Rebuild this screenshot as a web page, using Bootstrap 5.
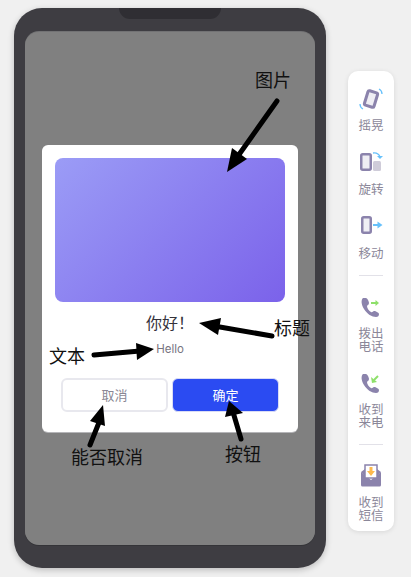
<!DOCTYPE html>
<html lang="zh">
<head>
<meta charset="utf-8">
<title>Dialog</title>
<link href="https://cdn.jsdelivr.net/npm/bootstrap@5.3.0/dist/css/bootstrap.min.css" rel="stylesheet">
<style>
html,body{height:100%;margin:0}
body{width:411px;height:577px;overflow:hidden;background:#f0f0f0;font-family:"Inter","Noto Sans CJK SC",sans-serif;position:relative}
.stage{padding:8px 0 0 14px;gap:22px}
.phone{width:312px;height:560px;background:#3e3d42;border-radius:28px;padding:24px 11px 23px;position:relative;box-shadow:0 2px 6px rgba(0,0,0,.22)}
.notch{position:absolute;top:0;left:105px;width:102px;height:11px;background:#2f2e33;border-radius:0 0 11px 11px}
.screen{height:513px;background:#808080;border-radius:14px;box-shadow:0 -1px 0 #727274,0 1px 0 #343438;padding-top:113px}
.dialog{width:256px;height:287px;margin-left:17px;background:#fff;border-radius:6px;padding:13px;box-shadow:0 1px 0 #b5b5b8}
.pic{height:144px;border-radius:8px;background:linear-gradient(135deg,#9b9cf6 0%,#7b62ea 100%)}
.ttl{font-size:16px;line-height:20px;margin-top:11px;color:#35323c;text-align:center}
.sub{font-size:11.500px;line-height:14px;margin-top:9px;color:#77747f;text-align:center}
.acts{margin:22px 6px 0;gap:4px}
.act{flex:0 0 107px;height:34px;border-radius:6px;font-size:13px;padding:0;line-height:30px}
.act-c{background:#fff;border:2px solid #e8e8ee;color:#8a8794}
.act-ok{background:#2b4bf2;border:1px solid #d9dcf5;color:#fff;line-height:32px}
.rail{width:46px;height:460px;margin-top:63px;background:#fff;border-radius:10px;box-shadow:0 1px 5px rgba(0,0,0,.1);padding-top:15px}
.tool{height:64px;font-size:12.500px;line-height:12.500px;color:#8b8799;text-align:center}
.tool svg{display:block;margin:0 auto 8px}
.tool-2{height:76px}
.tool-2 svg{margin-bottom:7px}
.sep{width:24px;height:1px;background:#e2e1e8;margin:0 auto 18px}
.sep-a{margin-top:-3px;margin-bottom:19px}
.sep-b{margin-top:-3px}
.tool-3 svg{margin-bottom:8px}
.ink{position:absolute;left:0;top:0;pointer-events:none}
.note{position:absolute;font-size:18px;line-height:22px;color:#111;white-space:nowrap}
</style>
</head>
<body>
<div class="stage d-flex align-items-start">
  <div class="phone">
    <div class="notch"></div>
    <div class="screen">
      <div class="dialog">
        <div class="pic"></div>
        <div class="ttl">你好！</div>
        <div class="sub">Hello</div>
        <div class="acts d-flex">
          <button class="btn act act-c" type="button">取消</button>
          <button class="btn act act-ok" type="button">确定</button>
        </div>
      </div>
    </div>
  </div>
  <div class="rail">
    <div class="tool">
      <svg width="28" height="26" viewBox="0 0 28 26"><rect x="9" y="5.500" width="10" height="15" rx="1.500" fill="#efeef4" stroke="#8b83ac" stroke-width="3" transform="rotate(17 14 13)"/><path d="M22 3c2 1 3 3 3 5M6 23c-2-1-3-3-3-5" fill="none" stroke="#67c1fb" stroke-width="1.300"/></svg>
      摇晃
    </div>
    <div class="tool">
      <svg width="28" height="26" viewBox="0 0 28 26"><rect x="4.250" y="4.250" width="9.500" height="15.500" rx="1.500" fill="#efeef4" stroke="#8b83ac" stroke-width="2.500"/><rect x="16" y="11" width="8" height="10" rx="1.500" fill="#cfccd9"/><path d="M16 3c4-.5 6 1 7 4" fill="none" stroke="#67c1fb" stroke-width="1.300"/><path d="M20 6h6l-3 3z" fill="#67c1fb"/></svg>
      旋转
    </div>
    <div class="tool">
      <svg width="28" height="26" viewBox="0 0 28 26"><rect x="5.250" y="3.250" width="8.500" height="15.500" rx="1.500" fill="#efeef4" stroke="#8b83ac" stroke-width="2.500"/><path d="M16 11h5" stroke="#67c1fb" stroke-width="2"/><path d="M20.500 7.500l5 3.500-5 3.500z" fill="#67c1fb"/></svg>
      移动
    </div>
    <div class="sep sep-a"></div>
    <div class="tool tool-2">
      <svg width="28" height="26" viewBox="0 0 28 26"><path d="M6 3C4 5 4 9 7 14s8 8 12 8c2 0 3-1 3-3 0-1-3-3-5-3-1 0-2 2-3 1-2-1-4-4-4-6 0-1 2-1 2-3 0-2-2-5-3-5z" fill="#8b83ac"/><path d="M14 8h5" stroke="#8ee06a" stroke-width="2"/><path d="M18.500 5l3.500 3-3.500 3z" fill="#8ee06a"/></svg>
      拨出<br>电话
    </div>
    <div class="tool tool-2">
      <svg width="28" height="26" viewBox="0 0 28 26"><path d="M6 3C4 5 4 9 7 14s8 8 12 8c2 0 3-1 3-3 0-1-3-3-5-3-1 0-2 2-3 1-2-1-4-4-4-6 0-1 2-1 2-3 0-2-2-5-3-5z" fill="#8b83ac"/><path d="M21 5l-4 4" stroke="#8ee06a" stroke-width="2"/><path d="M14 6l1 6 5-1z" fill="#8ee06a"/></svg>
      收到<br>来电
    </div>
    <div class="sep sep-b"></div>
    <div class="tool tool-3">
      <svg width="28" height="26" viewBox="0 0 28 26"><path d="M4 9l10 8 10-8v13a1.500 1.500 0 0 1-1.500 1.500h-17A1.500 1.500 0 0 1 4 22z" fill="#8b83ac"/><path d="M4 9l4-3v7zM24 9l-4-3v7z" fill="#8b83ac"/><rect x="8" y="2" width="12" height="13" fill="#fff" stroke="#8b83ac" stroke-width="1.500"/><path d="M12.500 4h3v4h2.500l-4 5-4-5h2.500z" fill="#fdb94e"/></svg>
      收到<br>短信
    </div>
  </div>
</div>

<svg class="ink" width="411" height="577" viewBox="0 0 411 577">
  <g stroke="#000" stroke-width="5" stroke-linecap="round" fill="#000">
    <path d="M277 101L238 156" fill="none"/>
    <path d="M272 336L214 326" fill="none"/>
    <path d="M94 355L140 351" fill="none"/>
    <path d="M90 445L100 420" fill="none"/>
    <path d="M241 439L233 412" fill="none"/>
  </g>
  <g fill="#000">
    <path d="M227 172L232 148L247 159z"/>
    <path d="M199 323L221 318L218 335z"/>
    <path d="M154 349L136 343L137 360z"/>
    <path d="M103 405L90 421L105 426z"/>
    <path d="M229 401L225 417L243 413z"/>
  </g>
</svg>
<span class="note" style="left:255px;top:70px">图片</span>
<span class="note" style="left:274px;top:318px">标题</span>
<span class="note" style="left:49px;top:346px">文本</span>
<span class="note" style="left:71px;top:447px">能否取消</span>
<span class="note" style="left:225px;top:444px">按钮</span>
<script src="https://cdn.jsdelivr.net/npm/bootstrap@5.3.0/dist/js/bootstrap.bundle.min.js"></script>
</body>
</html>
